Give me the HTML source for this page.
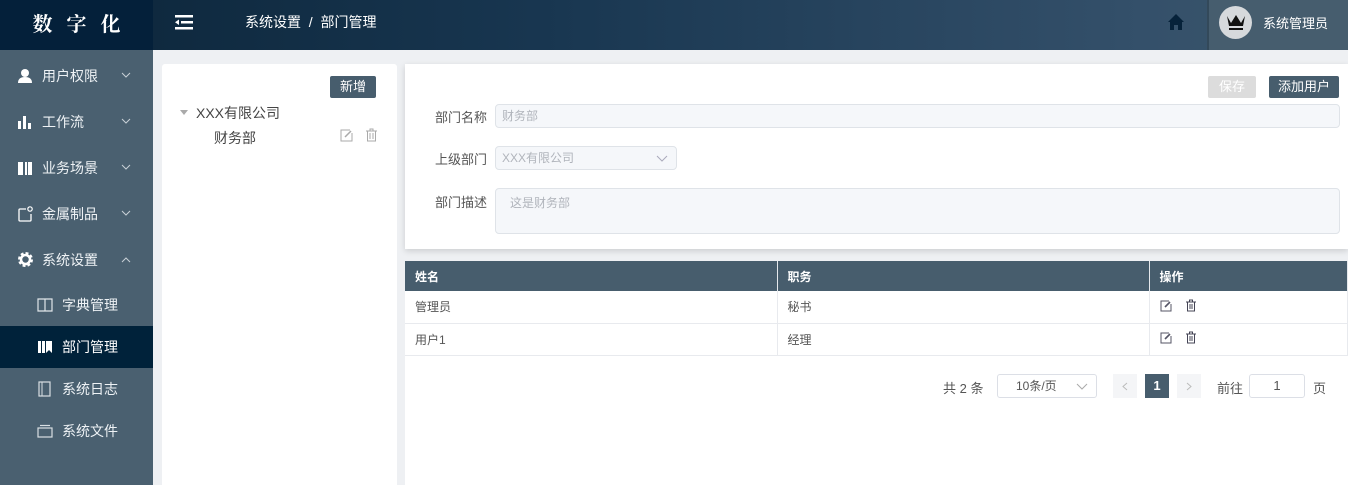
<!DOCTYPE html>
<html><head><meta charset="utf-8"><style>
*{box-sizing:border-box;margin:0;padding:0}
body{width:1348px;height:485px;overflow:hidden;font-family:"Liberation Sans","Noto Sans CJK SC",sans-serif;background:#eef0f3;position:relative;font-size:13px}
.hdr{position:absolute;left:0;top:0;width:1348px;height:50px;background:linear-gradient(90deg,#0b2438 0%,#183650 40%,#34506a 85%,#3d5668 100%)}
.logo{position:absolute;left:0;top:0;width:153px;height:50px;background:#04203a;color:#fff;font-family:"Noto Serif CJK SC",serif;font-weight:bold;font-size:20px;letter-spacing:14px;text-align:center;line-height:46px;padding-left:14px}
.user{position:absolute;left:1207px;top:0;width:141px;height:50px;background:#465d6e;border-left:2px solid #33495a}
.side{position:absolute;left:0;top:50px;width:153px;height:435px;background:#4a6070}
.mi{position:absolute;left:0;width:153px;height:42px;color:#eef2f5;font-size:14px;line-height:42px}
.mi .t{position:absolute;left:42px}
.mi .ar{position:absolute;left:121px;top:17px}
.sub .t{left:62px}
.act{background:#00223a;color:#fff}
.panel{position:absolute;background:#fff}
.btn{position:absolute;background:#475d6d;color:#fff;font-size:13px;text-align:center;border-radius:2px}
.lbl{position:absolute;left:435px;color:#555;font-size:13px}
.inp{position:absolute;background:#f5f7fa;border:1px solid #dfe3e8;border-radius:4px;color:#b0b4bb;font-size:12px;padding-left:6px}
table{position:absolute;left:405px;top:261px;width:943px;border-collapse:collapse;font-size:12px}
th{background:#475d6d;color:#fff;text-align:left;height:30px;padding-left:10px;border-right:1px solid #e5e8ec}
td{height:32px;padding-left:10px;border-right:1px solid #e8eaee;border-bottom:1px solid #e8eaee;color:#555}
</style></head><body>
<div class="hdr">
<div class="logo">数字化</div>
<svg style="position:absolute;left:175px;top:14px" width="18" height="16"><rect x="0" y="1" width="18" height="2.5" fill="#fff"/><rect x="6" y="7" width="12" height="2.5" fill="#fff"/><rect x="0" y="13" width="18" height="2.5" fill="#fff"/><path d="M0 8.2 L4 5.5 V11 Z" fill="#fff"/></svg>
<div style="position:absolute;left:245px;top:12px;color:#fff;font-size:14px">系统设置 &nbsp;/&nbsp; 部门管理</div>
<svg style="position:absolute;left:1167px;top:13px" width="18" height="18"><path d="M9 1 L1 9 H3 V17 H7 V12 H11 V17 H15 V9 H17 Z" fill="#06223a"/></svg>
<div class="user">
<div style="position:absolute;left:10px;top:6px;width:33px;height:33px;border-radius:50%;background:#d6d9dc"></div>
<svg style="position:absolute;left:17px;top:13px" width="20" height="18"><path d="M1 3 L5 10 L10 2 L15 10 L19 3 L17 13 H3 Z" fill="#111"/><rect x="3" y="15" width="14" height="2" fill="#111"/></svg>
<div style="position:absolute;left:54px;top:13px;color:#fff;font-size:13px">系统管理员</div>
</div>
</div>
<div class="side">
<div class="mi" style="top:5px"><svg style="position:absolute;left:17px;top:13px" width="16" height="16"><circle cx="8" cy="5" r="4" fill="#fff"/><path d="M1 15 Q1 9 8 9 Q15 9 15 15Z" fill="#fff"/></svg><span class="t">用户权限</span><svg class="ar" width="10" height="7"><path d="M1 1 L5 5 L9 1" fill="none" stroke="#c8d0d6"/></svg></div>
<div class="mi" style="top:51px"><svg style="position:absolute;left:17px;top:13px" width="16" height="16"><rect x="1" y="7" width="3" height="8" fill="#fff"/><rect x="6" y="2" width="3" height="13" fill="#fff"/><rect x="11" y="9" width="3" height="6" fill="#fff"/></svg><span class="t">工作流</span><svg class="ar" width="10" height="7"><path d="M1 1 L5 5 L9 1" fill="none" stroke="#c8d0d6"/></svg></div>
<div class="mi" style="top:97px"><svg style="position:absolute;left:17px;top:13px" width="16" height="16"><path d="M1 2 H6 V15 H1Z M8 2 H10 V15 H8Z M11 2 H15 V15 H11Z" fill="#fff"/></svg><span class="t">业务场景</span><svg class="ar" width="10" height="7"><path d="M1 1 L5 5 L9 1" fill="none" stroke="#c8d0d6"/></svg></div>
<div class="mi" style="top:143px"><svg style="position:absolute;left:17px;top:13px" width="16" height="16"><path d="M9 3 H3 Q2 3 2 4 V14 Q2 15 3 15 H13 Q14 15 14 14 V8" stroke="#fff" fill="none" stroke-width="1.3"/><circle cx="13" cy="3" r="2.2" stroke="#fff" fill="none" stroke-width="1.2"/></svg><span class="t">金属制品</span><svg class="ar" width="10" height="7"><path d="M1 1 L5 5 L9 1" fill="none" stroke="#c8d0d6"/></svg></div>
<div class="mi" style="top:189px"><svg style="position:absolute;left:17px;top:12px" width="17" height="17"><circle cx="8.5" cy="8.5" r="5.5" fill="none" stroke="#fff" stroke-width="4" stroke-dasharray="2.5 1.8"/><circle cx="8.5" cy="8.5" r="4.5" fill="none" stroke="#fff" stroke-width="2.5"/></svg><span class="t">系统设置</span><svg class="ar" width="10" height="7"><path d="M1 6 L5 2 L9 6" fill="none" stroke="#c8d0d6"/></svg></div>
<div class="mi sub" style="top:234px"><svg style="position:absolute;left:37px;top:14px" width="16" height="14"><path d="M1 1 H8 V13 H1Z M8 1 H15 V13 H8Z" fill="none" stroke="#e0e5e9" stroke-width="1.2"/></svg><span class="t">字典管理</span></div>
<div class="mi sub act" style="top:276px"><svg style="position:absolute;left:37px;top:14px" width="16" height="14"><path d="M1 1 H4 V13 H1Z M5 1 H8 V13 H5Z M9 1 H15 V13 L12 10 L9 13Z" fill="#fff"/></svg><span class="t">部门管理</span></div>
<div class="mi sub" style="top:318px"><svg style="position:absolute;left:37px;top:13px" width="15" height="16"><rect x="2" y="1" width="11" height="14" fill="none" stroke="#d9dfe3" stroke-width="1.2"/><path d="M5 1 V15" stroke="#d9dfe3"/></svg><span class="t">系统日志</span></div>
<div class="mi sub" style="top:360px"><svg style="position:absolute;left:37px;top:14px" width="16" height="14"><rect x="1" y="4" width="14" height="9" fill="none" stroke="#d9dfe3" stroke-width="1.2"/><path d="M3 1.5 H13" stroke="#d9dfe3" stroke-width="1.2"/></svg><span class="t">系统文件</span></div>
</div>
<div class="panel" style="left:162px;top:64px;width:235px;height:421px;border-radius:3px 3px 0 0">
<div class="btn" style="left:168px;top:12px;width:46px;height:22px;line-height:22px">新增</div>
<svg style="position:absolute;left:18px;top:46px" width="8" height="6"><path d="M0 0 H8 L4 5Z" fill="#aaa"/></svg>
<div style="position:absolute;left:34px;top:39px;color:#444;font-size:14px">XXX有限公司</div>
<div style="position:absolute;left:52px;top:64px;color:#444;font-size:14px">财务部</div>
<svg style="position:absolute;left:178px;top:65px" width="13" height="13"><path d="M10 1 H1 V12 H12 V4" fill="none" stroke="#aaa"/><path d="M5 8 L11 2" stroke="#aaa" stroke-width="1.5"/></svg>
<svg style="position:absolute;left:203px;top:64px" width="13" height="14"><path d="M1 3 H12 M5 3 V1 H8 V3 M2.5 3 V13 H10.5 V3 M5 5 V11 M8 5 V11" fill="none" stroke="#aaa"/></svg>
</div>
<div class="panel" style="left:405px;top:64px;width:943px;height:185px;box-shadow:0 2px 6px rgba(0,0,0,.15)">
<div class="btn" style="left:803px;top:12px;width:48px;height:22px;line-height:22px;background:#dcdcdc">保存</div>
<div class="btn" style="left:864px;top:12px;width:70px;height:22px;line-height:22px">添加用户</div>
</div>
<div class="lbl" style="top:107px">部门名称</div>
<div class="inp" style="left:495px;top:104px;width:845px;height:24px;line-height:22px">财务部</div>
<div class="lbl" style="top:149px">上级部门</div>
<div class="inp" style="left:495px;top:146px;width:182px;height:24px;line-height:22px">XXX有限公司<svg style="position:absolute;right:8px;top:8px" width="12" height="7"><path d="M1 1 L6 6 L11 1" fill="none" stroke="#aab"/></svg></div>
<div class="lbl" style="top:192px">部门描述</div>
<div class="inp" style="left:495px;top:188px;width:845px;height:46px;padding:5px 14px">这是财务部</div>
<div class="panel" style="left:405px;top:261px;width:943px;height:224px"></div>
<table>
<tr><th style="width:372px">姓名</th><th style="width:372px">职务</th><th>操作</th></tr>
<tr><td>管理员</td><td>秘书</td><td><svg width="12" height="12" style="margin-right:13px"><path d="M9 1 H1 V11 H11 V4" fill="none" stroke="#556"/><path d="M5 7 L10 2" stroke="#556" stroke-width="1.6"/></svg><svg width="12" height="13"><path d="M1 3 H11 M4.5 3 V1 H7.5 V3 M2.5 3 V12 H9.5 V3 M5 5 V10 M7 5 V10" fill="none" stroke="#445"/></svg></td></tr>
<tr><td>用户1</td><td>经理</td><td><svg width="12" height="12" style="margin-right:13px"><path d="M9 1 H1 V11 H11 V4" fill="none" stroke="#556"/><path d="M5 7 L10 2" stroke="#556" stroke-width="1.6"/></svg><svg width="12" height="13"><path d="M1 3 H11 M4.5 3 V1 H7.5 V3 M2.5 3 V12 H9.5 V3 M5 5 V10 M7 5 V10" fill="none" stroke="#445"/></svg></td></tr>
</table>
<div style="position:absolute;left:943px;top:378px;color:#555">共 2 条</div>
<div style="position:absolute;left:997px;top:374px;width:100px;height:24px;border:1px solid #dcdfe6;border-radius:3px;color:#555;line-height:22px;padding-left:18px;font-size:12px">10条/页<svg style="position:absolute;right:8px;top:8px" width="12" height="7"><path d="M1 1 L6 6 L11 1" fill="none" stroke="#aaa"/></svg></div>
<div style="position:absolute;left:1113px;top:374px;width:24px;height:24px;background:#f4f5f7"><svg style="position:absolute;left:9px;top:8px" width="6" height="9"><path d="M5 1 L1 4.5 L5 8" fill="none" stroke="#bbb"/></svg></div>
<div style="position:absolute;left:1145px;top:374px;width:24px;height:24px;background:#475d6d;color:#fff;text-align:center;line-height:24px;font-weight:bold">1</div>
<div style="position:absolute;left:1177px;top:374px;width:24px;height:24px;background:#f4f5f7"><svg style="position:absolute;left:9px;top:8px" width="6" height="9"><path d="M1 1 L5 4.5 L1 8" fill="none" stroke="#bbb"/></svg></div>
<div style="position:absolute;left:1217px;top:378px;color:#555">前往</div>
<div style="position:absolute;left:1249px;top:374px;width:56px;height:24px;border:1px solid #dcdfe6;border-radius:3px;text-align:center;line-height:22px;color:#555">1</div>
<div style="position:absolute;left:1313px;top:378px;color:#555">页</div>
</body></html>
